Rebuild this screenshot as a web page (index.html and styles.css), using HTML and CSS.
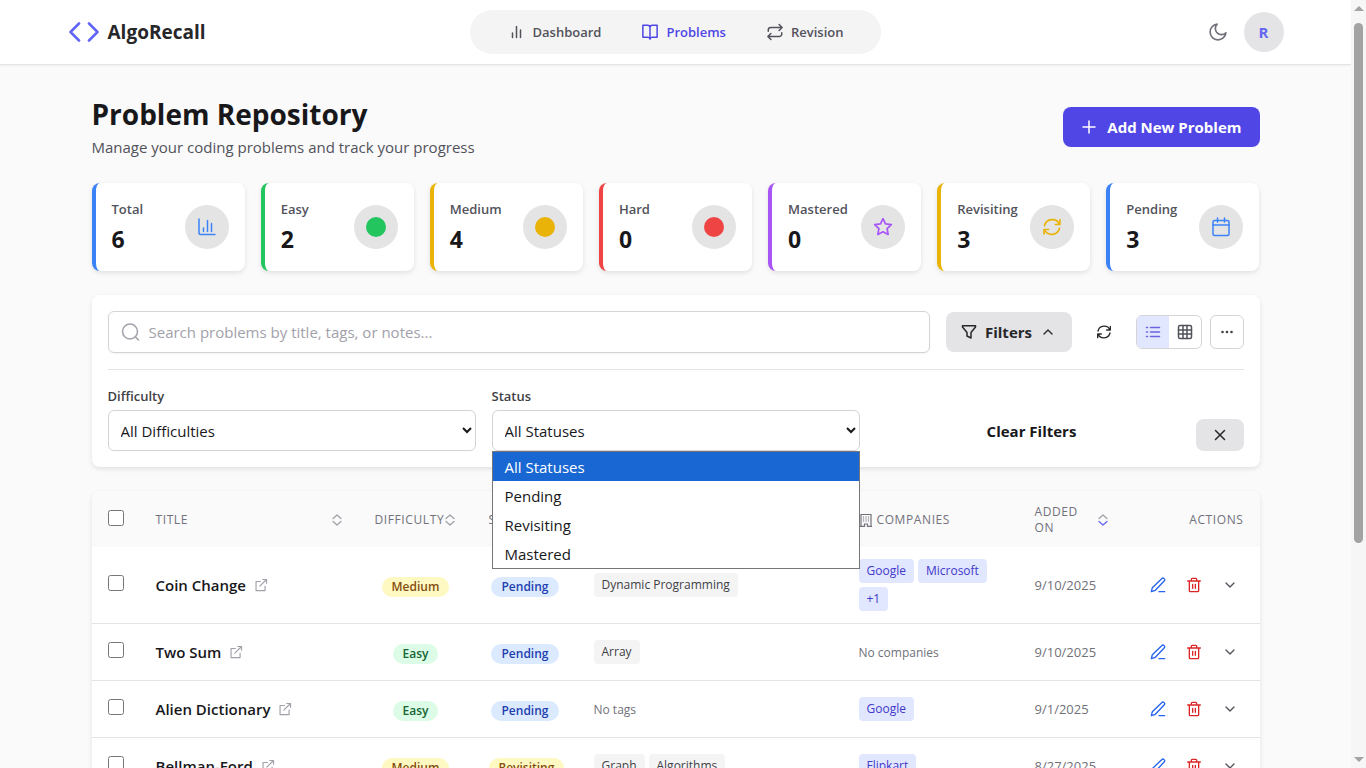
FILE: index.html
```html
<!DOCTYPE html>
<html lang="en">
<head>
<meta charset="utf-8">
<meta name="viewport" content="width=device-width, initial-scale=1">
<title>AlgoRecall</title>
<link rel="stylesheet" href="styles.css">
</head>
<body>
<svg class="sprite" aria-hidden="true">
  <symbol id="i-refresh" viewBox="0 0 24 24"><path d="M21.500 3.500v5.500h-5.500M2.500 20.500v-5.500h5.500M21 9A9.500 9.500 0 0 0 3 10.500M3 15a9.500 9.500 0 0 0 18-1.500"/></symbol>
  <symbol id="i-sort" viewBox="0 0 12 12"><path d="M2 4.500 6 1l4 3.500"/><path class="sort-down" d="M2 7.500 6 11l4-3.500"/></symbol>
  <symbol id="i-link" viewBox="0 0 24 24"><path d="M11 6H3.500v15.500H19V14M15 2.500h6.500V9M10 14 21 3"/></symbol>
  <symbol id="i-edit" viewBox="0 0 24 24"><path d="M2 22l1.500-6L17.500 2.500a2.500 2.500 0 0 1 3.700 3.600L8 20zM13.500 22H22"/></symbol>
  <symbol id="i-trash" viewBox="0 0 24 24"><path d="M2.500 6h19M5 6v14.500a1.500 1.500 0 0 0 1.500 1.500h11a1.500 1.500 0 0 0 1.500-1.500V6M8 6V3.500A1.500 1.500 0 0 1 9.500 2h5A1.500 1.500 0 0 1 16 3.500V6M10 11v6M14 11v6"/></symbol>
  <symbol id="i-down" viewBox="0 0 24 24"><path d="m6 9 6 6 6-6"/></symbol>
</svg>

<div class="app">
  <header class="topbar">
    <div class="topbar-inner">
      <a class="brand" href="#">
        <svg class="brand-icon" viewBox="0 0 32 20"><path d="M11 1.500 2.500 10l8.500 8.500M21 1.500l8.500 8.500-8.500 8.500"/></svg>
        <span>AlgoRecall</span>
      </a>
      <nav class="nav">
        <a class="nav-item" href="#"><svg class="icon i18" viewBox="0 0 18 18"><path d="M4.500 10v4.500M8.500 3.500v11M12.500 7v7.500"/></svg>Dashboard</a>
        <a class="nav-item active" href="#"><svg class="icon i18" viewBox="0 0 24 24"><path d="M12 6a3 3 0 0 0-3-3H2.500V19H9a3 3 0 0 1 3 2.500zM12 6a3 3 0 0 1 3-3h6.500V19H15a3 3 0 0 0-3 2.500"/></svg>Problems</a>
        <a class="nav-item" href="#"><svg class="icon i18" viewBox="0 0 24 24"><path d="m17.500 2 4 4-4 4M3 11V9.500A3.500 3.500 0 0 1 6.500 6h15M6.500 22l-4-4 4-4M21 13v1.500a3.500 3.500 0 0 1-3.500 3.500h-15"/></svg>Revision</a>
      </nav>
      <div class="account">
        <button class="plain" type="button" aria-label="Dark mode"><svg class="icon i20" viewBox="0 0 24 24"><path d="M21.500 13A9.500 9.500 0 1 1 11 2.500a7.300 7.300 0 0 0 10.500 10.500z"/></svg></button>
        <button class="avatar" type="button">R</button>
      </div>
    </div>
  </header>

  <main class="page">
    <div class="page-head">
      <div>
        <h1>Problem Repository</h1>
        <p class="subtitle">Manage your coding problems and track your progress</p>
      </div>
      <button class="btn-primary" type="button"><svg class="icon i20" viewBox="0 0 20 20"><path d="M10 4v12M4 10h12"/></svg>Add New Problem</button>
    </div>

    <section class="stats">
      <div class="stat blue"><div><div class="stat-label">Total</div><div class="stat-value">6</div></div><span class="stat-icon"><svg class="icon i20" viewBox="0 0 20 20"><path d="M2 2v14a1.500 1.500 0 0 0 1.500 1.500H18M6.500 11v3.500M10.500 3.500v11M14.500 6.500v8"/></svg></span></div>
      <div class="stat green"><div><div class="stat-label">Easy</div><div class="stat-value">2</div></div><span class="stat-icon"><span class="dot"></span></span></div>
      <div class="stat yellow"><div><div class="stat-label">Medium</div><div class="stat-value">4</div></div><span class="stat-icon"><span class="dot"></span></span></div>
      <div class="stat red"><div><div class="stat-label">Hard</div><div class="stat-value">0</div></div><span class="stat-icon"><span class="dot"></span></span></div>
      <div class="stat purple"><div><div class="stat-label">Mastered</div><div class="stat-value">0</div></div><span class="stat-icon"><svg class="icon i20" viewBox="0 0 24 24"><path d="m12 2 3 6.300 7 .9-5.100 4.800 1.300 7L12 17.700 5.800 21l1.300-7L2 9.200l7-.9z"/></svg></span></div>
      <div class="stat yellow"><div><div class="stat-label">Revisiting</div><div class="stat-value">3</div></div><span class="stat-icon"><svg class="icon i20"><use href="#i-refresh"/></svg></span></div>
      <div class="stat blue"><div><div class="stat-label">Pending</div><div class="stat-value">3</div></div><span class="stat-icon"><svg class="icon i20" viewBox="0 0 20 20"><rect x="2" y="3.500" width="16" height="15" rx="1.500"/><path d="M2 8h16M6.500 1v4M13.500 1v4"/></svg></span></div>
    </section>

    <section class="panel">
      <div class="toolbar">
        <label class="search">
          <svg class="icon i20" viewBox="0 0 20 20"><circle cx="9" cy="9.500" r="7.500"/><path d="m14.500 15 3 3"/></svg>
          <input type="text" placeholder="Search problems by title, tags, or notes..." aria-label="Search problems">
        </label>
        <button class="btn-filters" type="button"><svg class="icon i16" viewBox="0 0 16 16"><path d="M1.500 3V1.800h13V3L10 8.500V14l-4-2V8.500z"/></svg>Filters<svg class="icon i16" viewBox="0 0 24 24"><path d="m6 15 6-6 6 6"/></svg></button>
        <button class="btn-refresh" type="button" aria-label="Refresh"><svg class="icon i16"><use href="#i-refresh"/></svg></button>
        <div class="view-tools">
          <div class="view-toggle">
            <button class="selected" type="button" aria-label="List view"><svg class="icon i16" viewBox="0 0 16 16"><path d="M5.500 3.500h9M5.500 8h9M5.500 12.500h9M1.500 3.500h1M1.500 8h1M1.500 12.500h1"/></svg></button>
            <button type="button" aria-label="Grid view"><svg class="icon i16" viewBox="0 0 16 16"><rect x="1.500" y="1.500" width="13" height="13" rx="1.500"/><path d="M6 1.500v13M10 1.500v13M1.500 6h13M1.500 10h13"/></svg></button>
          </div>
          <button class="btn-more" type="button" aria-label="More"><svg class="i16 dots" viewBox="0 0 16 16"><circle cx="3.500" cy="8" r="1.300"/><circle cx="8" cy="8" r="1.300"/><circle cx="12.500" cy="8" r="1.300"/></svg></button>
        </div>
      </div>
      <div class="filters">
        <div class="field">
          <label for="difficulty">Difficulty</label>
          <select id="difficulty"><option>All Difficulties</option><option>Easy</option><option>Medium</option><option>Hard</option></select>
        </div>
        <div class="field">
          <label for="status">Status</label>
          <select id="status"><option>All Statuses</option><option>Pending</option><option>Revisiting</option><option>Mastered</option></select>
          <ul class="menu" role="listbox" aria-label="Status">
            <li class="current" role="option" aria-selected="true">All Statuses</li>
            <li role="option">Pending</li>
            <li role="option">Revisiting</li>
            <li role="option">Mastered</li>
          </ul>
        </div>
        <div class="filter-actions">
          <button class="btn-clear" type="button">Clear Filters</button>
          <button class="btn-close" type="button" aria-label="Close filters"><svg class="icon i16" viewBox="0 0 16 16"><path d="m3.500 3.500 9 9M12.500 3.500l-9 9"/></svg></button>
        </div>
      </div>
    </section>

    <section class="table-card">
      <table class="problems">
        <colgroup><col class="c-check"><col class="c-title"><col class="c-diff"><col class="c-status"><col class="c-tags"><col class="c-comp"><col class="c-added"><col class="c-actions"></colgroup>
        <thead>
          <tr>
            <th><input type="checkbox" aria-label="Select all"></th>
            <th><span class="th spread">Title<svg class="sort"><use href="#i-sort"/></svg></span></th>
            <th><span class="th">Difficulty<svg class="sort"><use href="#i-sort"/></svg></span></th>
            <th><span class="th spread">Status<svg class="sort"><use href="#i-sort"/></svg></span></th>
            <th><span class="th">Tags</span></th>
            <th><span class="th labelled"><svg class="building" viewBox="0 0 14 14"><path d="M2 13V1.500h10V13M1 13.300h4.500V11h3v2.300H13"/><path class="windows" d="M4.500 3.500v6M7 3.500v6M9.500 3.500v6"/></svg>Companies</span></th>
            <th><span class="th spread">Added<br>On<svg class="sort desc"><use href="#i-sort"/></svg></span></th>
            <th class="right">Actions</th>
          </tr>
        </thead>
        <tbody>
          <tr>
            <td><input type="checkbox" aria-label="Select Coin Change"></td>
            <td><a class="title" href="#">Coin Change<svg class="icon i14"><use href="#i-link"/></svg></a></td>
            <td class="center"><span class="badge medium">Medium</span></td>
            <td class="center"><span class="badge pending">Pending</span></td>
            <td><div class="chips"><span class="chip">Dynamic Programming</span></div></td>
            <td><div class="chips"><span class="chip company">Google</span><span class="chip company">Microsoft</span><span class="chip company">+1</span></div></td>
            <td class="date">9/10/2025</td>
            <td><div class="actions"><button class="edit" type="button" aria-label="Edit"><svg class="icon i16"><use href="#i-edit"/></svg></button><button class="delete" type="button" aria-label="Delete"><svg class="icon i16"><use href="#i-trash"/></svg></button><button class="expand" type="button" aria-label="Expand"><svg class="icon i16"><use href="#i-down"/></svg></button></div></td>
          </tr>
          <tr>
            <td><input type="checkbox" aria-label="Select Two Sum"></td>
            <td><a class="title" href="#">Two Sum<svg class="icon i14"><use href="#i-link"/></svg></a></td>
            <td class="center"><span class="badge easy">Easy</span></td>
            <td class="center"><span class="badge pending">Pending</span></td>
            <td><div class="chips"><span class="chip">Array</span></div></td>
            <td><span class="empty">No companies</span></td>
            <td class="date">9/10/2025</td>
            <td><div class="actions"><button class="edit" type="button" aria-label="Edit"><svg class="icon i16"><use href="#i-edit"/></svg></button><button class="delete" type="button" aria-label="Delete"><svg class="icon i16"><use href="#i-trash"/></svg></button><button class="expand" type="button" aria-label="Expand"><svg class="icon i16"><use href="#i-down"/></svg></button></div></td>
          </tr>
          <tr>
            <td><input type="checkbox" aria-label="Select Alien Dictionary"></td>
            <td><a class="title" href="#">Alien Dictionary<svg class="icon i14"><use href="#i-link"/></svg></a></td>
            <td class="center"><span class="badge easy">Easy</span></td>
            <td class="center"><span class="badge pending">Pending</span></td>
            <td><span class="empty">No tags</span></td>
            <td><div class="chips"><span class="chip company">Google</span></div></td>
            <td class="date">9/1/2025</td>
            <td><div class="actions"><button class="edit" type="button" aria-label="Edit"><svg class="icon i16"><use href="#i-edit"/></svg></button><button class="delete" type="button" aria-label="Delete"><svg class="icon i16"><use href="#i-trash"/></svg></button><button class="expand" type="button" aria-label="Expand"><svg class="icon i16"><use href="#i-down"/></svg></button></div></td>
          </tr>
          <tr>
            <td><input type="checkbox" aria-label="Select Bellman-Ford"></td>
            <td><a class="title" href="#">Bellman-Ford<svg class="icon i14"><use href="#i-link"/></svg></a></td>
            <td class="center"><span class="badge medium">Medium</span></td>
            <td class="center"><span class="badge revisiting">Revisiting</span></td>
            <td><div class="chips"><span class="chip">Graph</span><span class="chip">Algorithms</span></div></td>
            <td><div class="chips"><span class="chip company">Flipkart</span></div></td>
            <td class="date">8/27/2025</td>
            <td><div class="actions"><button class="edit" type="button" aria-label="Edit"><svg class="icon i16"><use href="#i-edit"/></svg></button><button class="delete" type="button" aria-label="Delete"><svg class="icon i16"><use href="#i-trash"/></svg></button><button class="expand" type="button" aria-label="Expand"><svg class="icon i16"><use href="#i-down"/></svg></button></div></td>
          </tr>
        </tbody>
      </table>
    </section>
  </main>
</div>
<div class="scrollbar" aria-hidden="true">
  <span class="arrow arrow-up"></span>
  <div class="track"><div class="thumb"></div></div>
  <span class="arrow arrow-down"></span>
</div>
</body>
</html>
```
FILE: styles.css
```css
* { box-sizing: border-box; }

body {
  margin: 0;
  display: flex;
  height: 100vh;
  overflow: hidden;
  background: #fafafa;
  color: #18181b;
  font: 15px/24px "Open Sans", "Noto Sans", sans-serif;
}

button, input, select { font: inherit; color: inherit; }
button { display: inline-flex; align-items: center; justify-content: center; border: 0; background: none; padding: 0; cursor: pointer; }
a { color: inherit; text-decoration: none; }
h1, p, ul { margin: 0; padding: 0; }
.sprite { position: absolute; width: 0; height: 0; }

.icon { fill: none; stroke: currentColor; stroke-width: 2; stroke-linecap: round; stroke-linejoin: round; flex: none; }
.i14 { width: 14px; height: 14px; }
.i16 { width: 16px; height: 16px; }
.i18 { width: 18px; height: 18px; }
.i20 { width: 20px; height: 20px; }
.icon[viewBox="0 0 16 16"], .icon[viewBox="0 0 18 18"], .icon[viewBox="0 0 20 20"] { stroke-width: 1.5; }

.app { flex: 1; min-width: 0; overflow: hidden; }

/* Top bar */
.topbar { background: #fff; border-bottom: 1px solid #e4e4e7; box-shadow: 0 1px 2px rgba(0, 0, 0, .05); }
.topbar-inner { max-width: 1280px; margin: 0 auto; padding: 10px 32px; display: grid; grid-template-columns: 1fr auto 1fr; align-items: center; }
.brand { display: flex; align-items: center; gap: 8px; font-size: 19px; font-weight: 700; color: #27272a; }
.brand-icon { width: 32px; height: 20px; fill: none; stroke: #6366f1; stroke-width: 2.6; stroke-linecap: round; stroke-linejoin: round; }
.nav { display: flex; height: 44px; padding: 0 18px; border-radius: 22px; background: #f4f4f4; }
.nav-item { display: flex; align-items: center; gap: 7px; padding: 0 20px; font-size: 13px; font-weight: 600; color: #52525b; }
.nav-item.active { color: #4f46e5; }
.account { display: flex; justify-content: flex-end; align-items: center; gap: 16px; }
.plain { color: #71717a; }
.avatar { width: 40px; height: 40px; border-radius: 50%; background: #e4e4e7; color: #6366f1; font-weight: 700; }

/* Page heading */
.page { max-width: 1280px; margin: 0 auto; padding: 30px 56px; display: flex; flex-direction: column; gap: 24px; }
.page-head { display: flex; justify-content: space-between; align-items: center; }
h1 { margin-bottom: 2px; font-size: 28px; line-height: 38px; font-weight: 700; }
.subtitle { color: #52525b; }
.btn-primary { height: 40px; padding: 0 18px 0 16px; gap: 8px; border-radius: 8px; background: #4f46e5; color: #fff; font-weight: 700; }

/* Statistics */
.stats { display: grid; grid-template-columns: repeat(7, 1fr); gap: 16px; }
.stat { display: flex; justify-content: space-between; align-items: center; padding: 16px; border-left: 4px solid; border-radius: 8px; background: #fff; box-shadow: 0 2px 5px rgba(0, 0, 0, .1); }
.stat-label { font-size: 13px; line-height: 20px; font-weight: 600; color: #52525b; }
.stat-value { margin-top: 4px; font-size: 23px; line-height: 32px; font-weight: 700; color: #18181b; }
.stat-icon { display: flex; align-items: center; justify-content: center; width: 44px; height: 44px; border-radius: 50%; background: #e4e4e4; flex: none; }
.dot { width: 20px; height: 20px; border-radius: 50%; background: currentColor; }
.blue { color: #3b82f6; }
.green { color: #22c55e; }
.yellow { color: #eab308; }
.red { color: #ef4444; }
.purple { color: #a855f7; }

/* Filter panel */
.panel { padding: 16px; border-radius: 8px; background: #fff; box-shadow: 0 2px 5px rgba(0, 0, 0, .1); }
.toolbar { display: flex; align-items: center; gap: 16px; padding-bottom: 16px; border-bottom: 1px solid #e4e4e7; }
.search { display: flex; align-items: center; flex: 1; height: 42px; padding: 0 12px; gap: 8px; border: 1px solid #d4d4d8; border-radius: 6px; color: #a1a1aa; box-shadow: 0 1px 2px rgba(0, 0, 0, .05); }
.search input { flex: 1; min-width: 0; border: 0; padding: 0; outline: 0; background: none; color: #18181b; }
.search input::placeholder { color: #a1a1aa; opacity: 1; }
.btn-filters { width: 126px; height: 40px; gap: 8px; border-radius: 8px; background: #e4e4e7; color: #27272a; font-weight: 700; }
.btn-refresh { width: 32px; height: 32px; color: #27272a; }
.view-tools { display: flex; gap: 8px; }
.view-toggle { display: flex; border: 1px solid #d4d4d8; border-radius: 6px; overflow: hidden; color: #52525b; }
.view-toggle button { width: 32px; height: 32px; }
.view-toggle .selected { background: #e0e7ff; color: #6d63e0; }
.btn-more { width: 34px; height: 34px; border: 1px solid #d4d4d8; border-radius: 6px; color: #3f3f46; }
.dots { fill: currentColor; }

.filters { display: grid; grid-template-columns: repeat(3, 1fr); gap: 16px; padding-top: 16px; }
.field { position: relative; }
.field label { display: block; margin-bottom: 4px; font-size: 13px; line-height: 20px; font-weight: 600; color: #3f3f46; }
.field select { display: block; width: 100%; height: 41px; padding: 0 8px; border: 1px solid #d4d4d8; border-radius: 6px; background: #fff; color: #18181b; }
.menu { position: absolute; top: 100%; left: 0; right: 0; z-index: 5; border: 1px solid #767676; background: #fff; list-style: none; }
.menu li { padding: 1px 12px 0; line-height: 28px; }
.menu .current { background: #1967d2; color: #fff; }
.filter-actions { display: flex; align-items: flex-end; gap: 8px; }
.btn-clear { flex: 1; height: 40px; font-weight: 700; }
.btn-close { width: 48px; height: 32px; border-radius: 8px; background: #e4e4e7; color: #27272a; }

/* Problems table */
.table-card { border-radius: 8px; overflow: hidden; background: #fff; box-shadow: 0 2px 5px rgba(0, 0, 0, .1); }
.problems { width: 100%; table-layout: fixed; border-collapse: collapse; }
.c-check { width: 48px; }
.c-diff { width: 114px; }
.c-status { width: 105px; }
.c-tags { width: 265px; }
.c-comp { width: 176px; }
.c-added { width: 106px; }
.c-actions { width: 135px; }
thead { background: #fafafa; }
th { padding: 13px 16px 11px; font-size: 12px; line-height: 16px; font-weight: 500; letter-spacing: .05em; text-align: left; text-transform: uppercase; color: #71717a; }
th.right { text-align: right; }
td { height: 57px; padding: 12px 16px; }
tbody tr { border-bottom: 1px solid #e4e4e7; }
.th { display: flex; align-items: center; }
.labelled { gap: 4px; }
.spread { justify-content: space-between; }
.sort { --down: #a1a1aa; width: 12px; height: 12px; flex: none; fill: none; stroke: #a1a1aa; stroke-width: 1.3; stroke-linecap: round; stroke-linejoin: round; }
.sort.desc { --down: #6366f1; }
.sort-down { stroke: var(--down); }
.building { width: 14px; height: 14px; flex: none; fill: none; stroke: #71717a; stroke-width: 1.2; }
.windows { stroke-dasharray: 1 1; }
input[type="checkbox"] { width: 16px; height: 16px; margin: 0; }
.title { display: inline-flex; align-items: center; gap: 8px; font-weight: 600; white-space: nowrap; }
.title .icon { color: #a1a1aa; }
.center { text-align: center; }
.badge { display: inline-block; padding: 0 10px; border-radius: 10px; font-size: 12px; line-height: 20px; font-weight: 600; }
.medium, .revisiting { background: #fef9c3; color: #854d0e; }
.easy { background: #dcfce7; color: #166534; }
.pending { background: #dbeafe; color: #1e40af; }
.chips { display: flex; flex-wrap: wrap; gap: 4px; }
.chip { padding: 4px 8px; border-radius: 4px; background: #f4f4f5; color: #3f3f46; font-size: 12px; line-height: 16px; white-space: nowrap; }
.company { background: #e0e7ff; color: #4338ca; }
.empty { font-size: 12px; color: #71717a; }
.date { font-size: 13px; color: #71717a; }
.actions { display: flex; justify-content: flex-end; gap: 8px; }
.actions button { width: 28px; height: 28px; }
.edit { color: #2563eb; }
.delete { color: #dc2626; }
.expand { color: #52525b; }

/* Scrollbar */
.scrollbar { width: 15px; flex: none; display: flex; flex-direction: column; align-items: center; padding: 6px 0; gap: 12px; background: #f6f6f6; }
.arrow { border: 5px solid transparent; }
.arrow-up { border-top: 0; border-bottom-color: #a3a3a3; }
.arrow-down { border-bottom: 0; border-top-color: #a3a3a3; }
.track { flex: 1; width: 9px; }
.thumb { height: 72%; border-radius: 5px; background: #a3a3a3; }
```
